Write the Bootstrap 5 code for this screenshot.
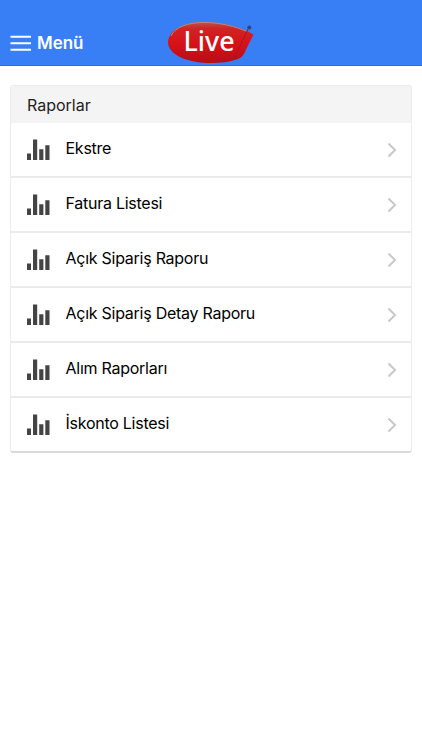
<!DOCTYPE html>
<html lang="tr">
<head>
<meta charset="utf-8">
<meta name="viewport" content="width=device-width, initial-scale=1">
<title>Raporlar</title>
<link href="https://cdn.jsdelivr.net/npm/bootstrap@5.3.0/dist/css/bootstrap.min.css" rel="stylesheet">
<style>
body{font-family:Inter,"Liberation Sans",sans-serif;font-size:16px;letter-spacing:-.26px;color:#000;background:#fff}
.topbar{height:66px;padding:31px 10px 0;background:#387ef5;border-bottom:1px solid #2d6dde}
.menu-btn{width:158px;font-size:17px;font-weight:600;line-height:24px;gap:6px;letter-spacing:-.05px}
.brand-logo{margin-top:-11px}
.report-card{margin:19px 10px 0;border:1px solid #ececec;border-bottom:2px solid #d9d9d9;border-radius:3px}
.report-head{height:37px;padding:0 16px;background:#f4f4f4;color:#222;letter-spacing:0}
.report-card .report-row{height:55px;padding:0 14px 0 16px;border:0 solid #ebebeb;border-bottom-width:2px;color:#000}
.report-card .report-row:last-child{height:53px;border-bottom-width:0}
.report-name{margin-left:15.500px;line-height:24px;padding-bottom:4px}
</style>
<script src="https://cdn.jsdelivr.net/npm/bootstrap@5.3.0/dist/js/bootstrap.bundle.min.js"></script>
</head>
<body>
<svg class="d-none">
  <symbol id="bars" viewBox="0 0 23 21"><path fill="#444" d="M0 14.500h4V21H0zM6 .5h4.200V21H6zM12.200 10.300h4.200V21h-4.200zM18.300 6.200h4.200V21h-4.200z"/></symbol>
  <symbol id="chev" viewBox="0 0 10 16"><path fill="none" stroke="#c8c8c8" stroke-width="2" d="M1.500 1.500 8 8l-6.500 6.500"/></symbol>
</svg>
<header class="topbar d-flex align-items-start">
  <a class="menu-btn d-flex align-items-center text-white text-decoration-none" href="#menu">
    <svg width="21" height="16" viewBox="0 0 21 16"><path stroke="#fff" stroke-width="2" d="M.5 1.700h20.500M.5 8.200h20.500M.5 14.700h20.500"/></svg>
    <span>Menü</span>
  </a>
  <svg class="brand-logo" width="88" height="45" viewBox="168 20 88 45" role="img" aria-label="Live">
    <defs>
      <linearGradient id="red" x1="0" y1="0" x2="0" y2="1"><stop offset="0" stop-color="#b8564a"/><stop offset=".16" stop-color="#cf2424"/><stop offset=".5" stop-color="#d81219"/><stop offset="1" stop-color="#b80d16"/></linearGradient>
    </defs>
    <path fill="url(#red)" d="M168 42c1-13 17-20 36-20 17 0 31 4 43 9l6.500 3.500-7.500 15c-2 5-4 8-8 9.500-9 3-17 4-27 4-23 0-43-8-43-21z"/>
    <path fill="none" stroke="#c98275" stroke-width="1" d="M171 36c4-9 17-13.500 33-13.500 17 0 31 4 43 9"/>
    <path fill="none" stroke="#a51620" stroke-width="1" d="m248 29-7 15-7 15"/>
    <circle cx="249.300" cy="27.500" r="2" fill="#284687"/>
    <text x="183.500" y="51" fill="#fff" font-family="'Noto Sans',sans-serif" font-size="27.500" font-weight="500" letter-spacing="0" textLength="51" lengthAdjust="spacingAndGlyphs">Live</text>
  </svg>
</header>
<main class="card report-card overflow-hidden">
  <div class="report-head d-flex align-items-center">Raporlar</div>
  <div class="list-group list-group-flush border-top-0">
    <a class="list-group-item report-row d-flex align-items-center" href="#ekstre"><svg width="23" height="21"><use href="#bars"/></svg><span class="report-name">Ekstre</span><svg class="ms-auto" width="10" height="16"><use href="#chev"/></svg></a>
    <a class="list-group-item report-row d-flex align-items-center" href="#fatura"><svg width="23" height="21"><use href="#bars"/></svg><span class="report-name">Fatura Listesi</span><svg class="ms-auto" width="10" height="16"><use href="#chev"/></svg></a>
    <a class="list-group-item report-row d-flex align-items-center" href="#siparis"><svg width="23" height="21"><use href="#bars"/></svg><span class="report-name">Açık Sipariş Raporu</span><svg class="ms-auto" width="10" height="16"><use href="#chev"/></svg></a>
    <a class="list-group-item report-row d-flex align-items-center" href="#detay"><svg width="23" height="21"><use href="#bars"/></svg><span class="report-name">Açık Sipariş Detay Raporu</span><svg class="ms-auto" width="10" height="16"><use href="#chev"/></svg></a>
    <a class="list-group-item report-row d-flex align-items-center" href="#alim"><svg width="23" height="21"><use href="#bars"/></svg><span class="report-name">Alım Raporları</span><svg class="ms-auto" width="10" height="16"><use href="#chev"/></svg></a>
    <a class="list-group-item report-row d-flex align-items-center" href="#iskonto"><svg width="23" height="21"><use href="#bars"/></svg><span class="report-name">İskonto Listesi</span><svg class="ms-auto" width="10" height="16"><use href="#chev"/></svg></a>
  </div>
</main>
</body>
</html>
